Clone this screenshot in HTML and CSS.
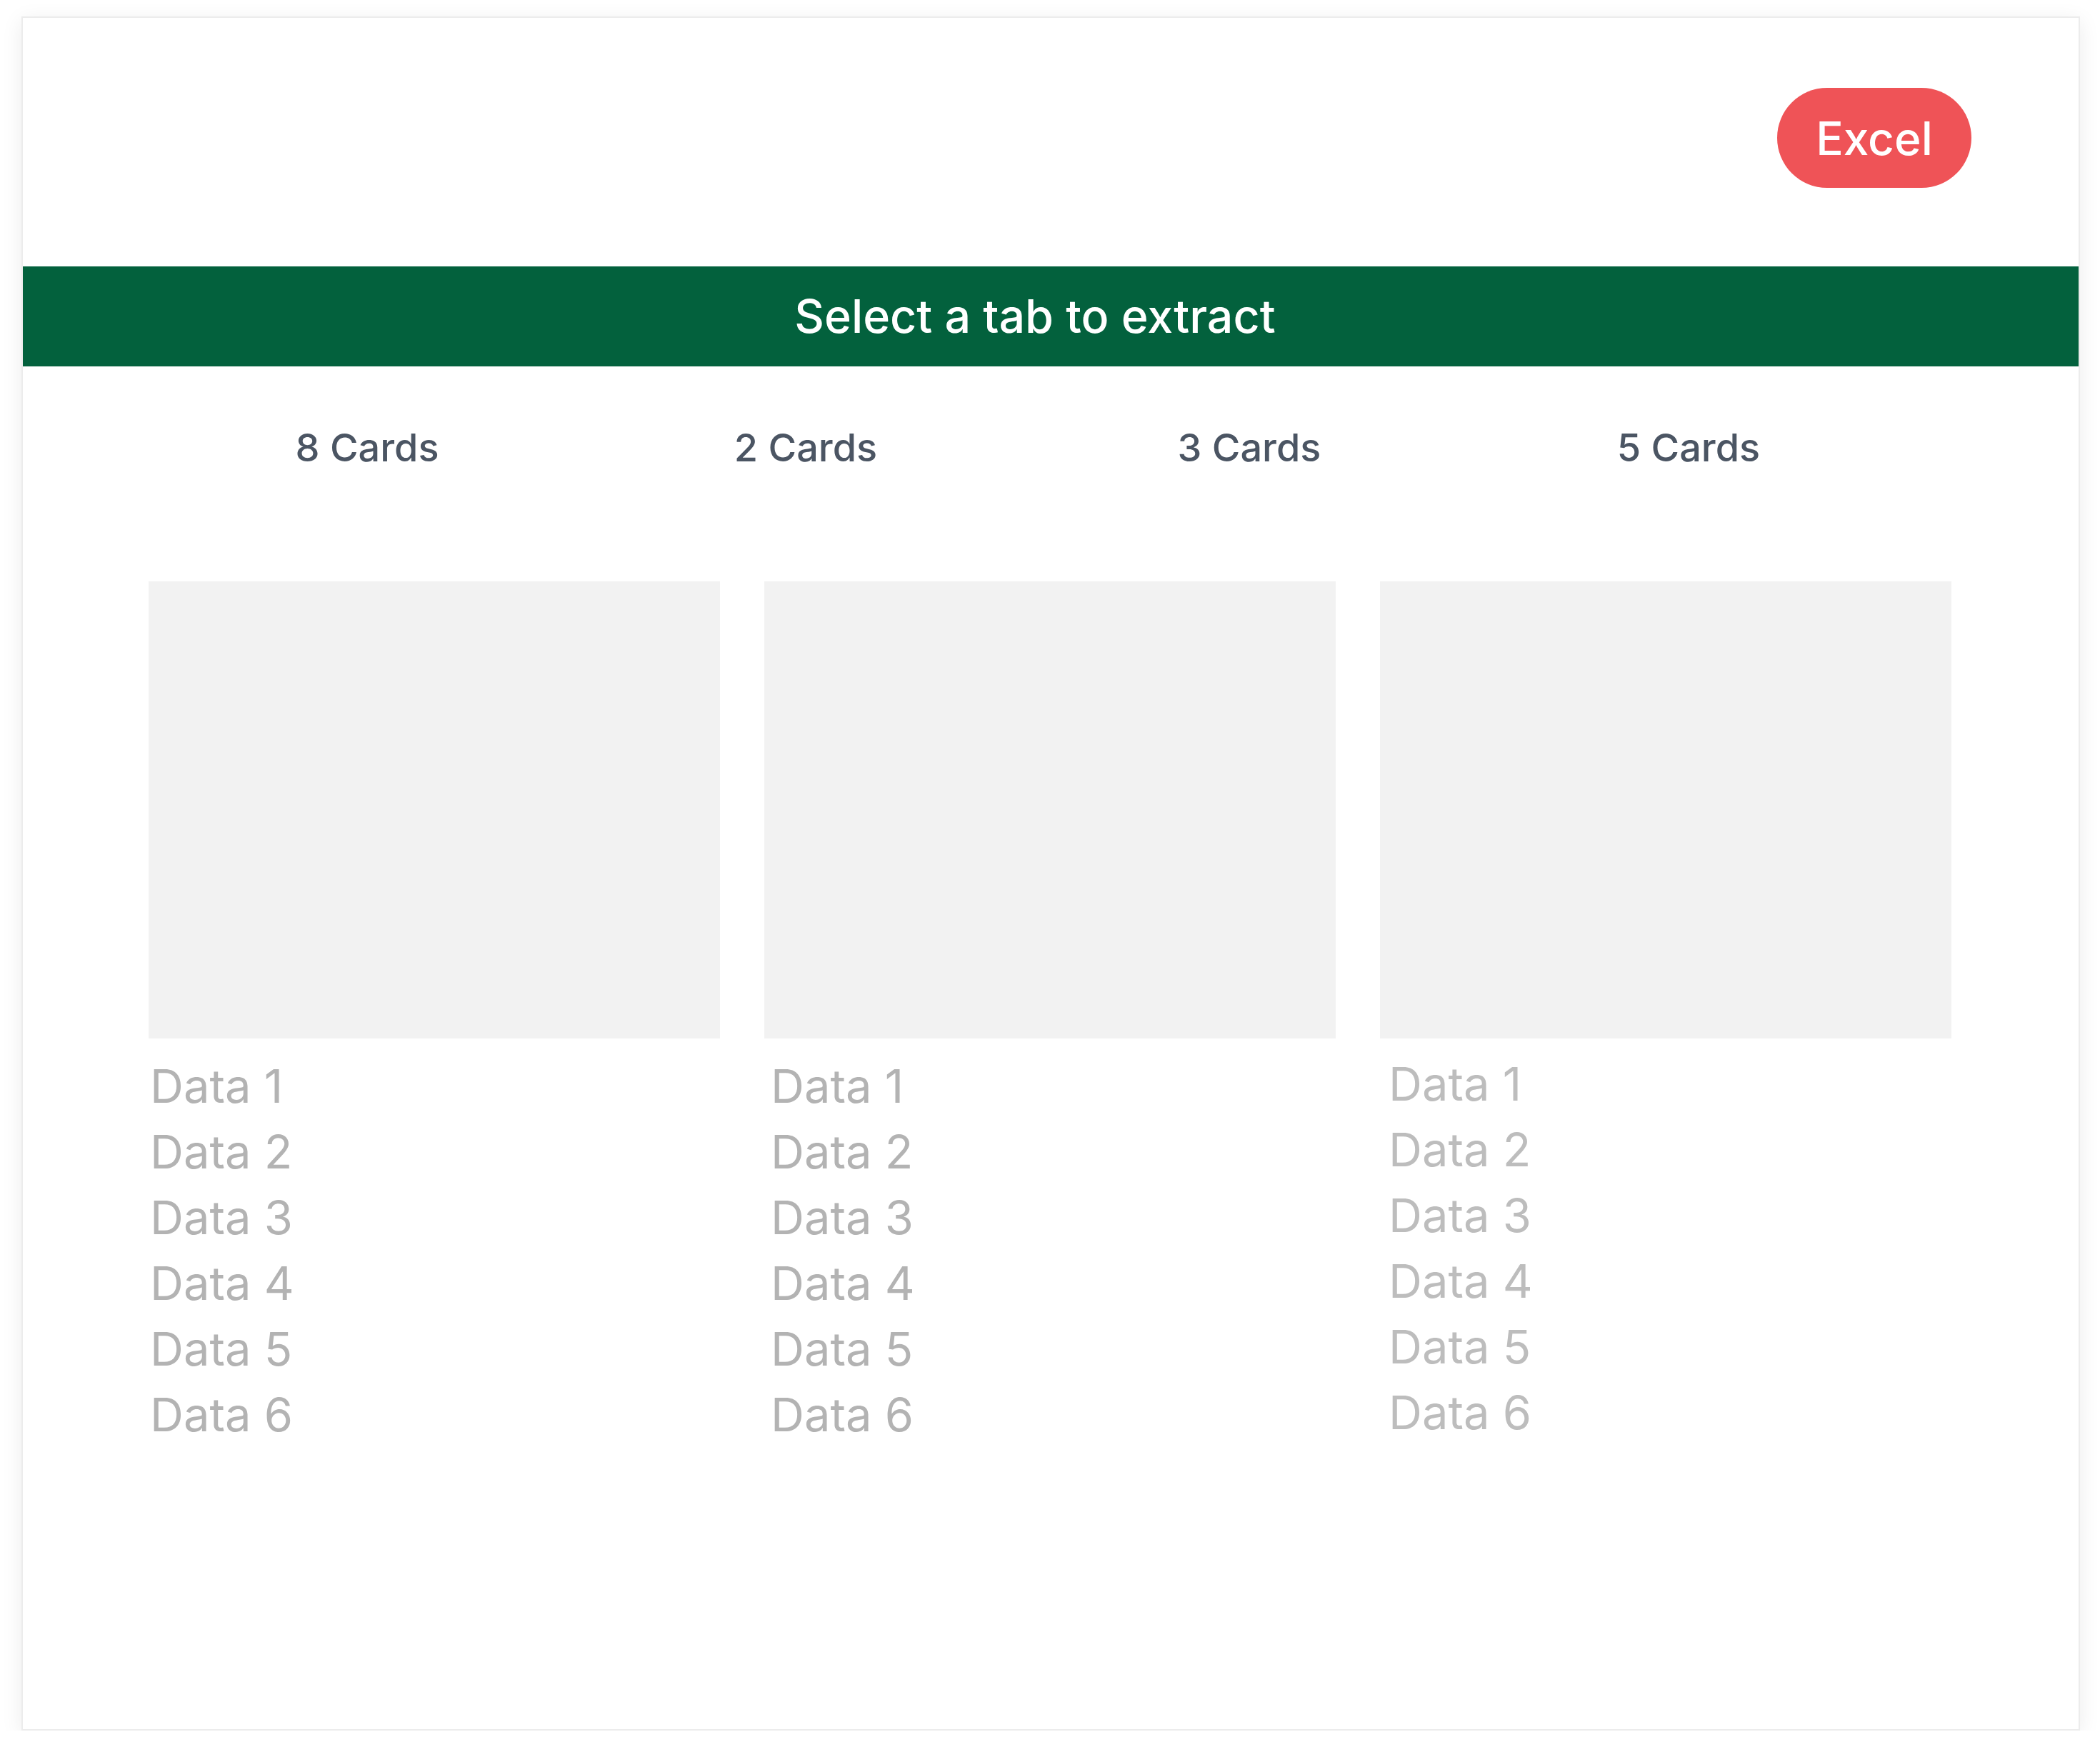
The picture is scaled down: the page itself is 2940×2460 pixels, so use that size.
FILE: index.html
```html
<!DOCTYPE html>
<html>
<head>
    <title>Extract Cards</title>
    <link rel="stylesheet" href="styles.css">
</head>
<body>
    <div class="extract-container">
        <div class="top-bar">
            <button class="excel-button" type="button">Excel</button>
        </div>

        <div class="title-bar">Select a tab to extract</div>

        <div class="tab-list">
            <div class="tab">8 Cards</div>
            <div class="tab">2 Cards</div>
            <div class="tab">3 Cards</div>
            <div class="tab">5 Cards</div>
        </div>

        <div class="card-grid">
            <div class="card card-first">
                <div class="card-image"></div>
                <ul class="card-data">
                    <li>Data 1</li>
                    <li>Data 2</li>
                    <li>Data 3</li>
                    <li>Data 4</li>
                    <li>Data 5</li>
                    <li>Data 6</li>
                </ul>
            </div>
            <div class="card card-second">
                <div class="card-image"></div>
                <ul class="card-data">
                    <li>Data 1</li>
                    <li>Data 2</li>
                    <li>Data 3</li>
                    <li>Data 4</li>
                    <li>Data 5</li>
                    <li>Data 6</li>
                </ul>
            </div>
            <div class="card card-third">
                <div class="card-image"></div>
                <ul class="card-data">
                    <li>Data 1</li>
                    <li>Data 2</li>
                    <li>Data 3</li>
                    <li>Data 4</li>
                    <li>Data 5</li>
                    <li>Data 6</li>
                </ul>
            </div>
        </div>
    </div>
</body>
</html>
```

FILE: styles.css
```css
body {
    margin: 0;
    font-family: Inter, "Noto Sans", Arial, sans-serif;
    background-color: #fff;
}

.extract-container {
    box-sizing: border-box;
    width: 2882px;
    height: 2400px;
    margin: 23px 0 0 30px;
    border: 2px solid #ececec;
    background-color: #fff;
    box-shadow: 0 6px 28px rgba(0, 0, 0, 0.08); /* soft frame shadow */
}

.top-bar {
    box-sizing: border-box;
    height: 348px;
    display: flex;
    justify-content: flex-end;
    align-items: flex-start;
    padding: 98px 150px 0 0;
}

.excel-button {
    width: 272px;
    height: 140px;
    border: none;
    border-radius: 70px;
    background-color: #ef5357; /* red */
    color: #fff;
    font-family: Inter, "Noto Sans", Arial, sans-serif;
    font-size: 64px;
    font-weight: 500;
    cursor: pointer;
}

.title-bar {
    height: 140px;
    display: flex;
    justify-content: center;
    align-items: center;
    padding-right: 44px;
    background-color: #03613d; /* dark green */
    color: #fff;
    font-size: 64.5px;
    font-weight: 500;
}

.tab-list {
    display: grid;
    grid-template-columns: 616px 612px 630px 600px;
    padding: 81px 0 0 174px;
}

.tab {
    text-align: center;
    color: #4b5563;
    font-size: 54px;
    font-weight: 500;
    line-height: 65px;
    cursor: pointer;
}

.card-grid {
    display: grid;
    grid-template-columns: repeat(3, 800px);
    column-gap: 62px;
    padding: 155px 0 0 176px;
}

.card-image {
    height: 640px;
    background-color: #f2f2f2;
}

.card-data {
    list-style: none;
    margin: 21px 0 0 0;
    padding: 0 0 0 2px;
    color: #b3b3b3;
    font-size: 65px;
    line-height: 92px;
}

.card-second .card-data {
    padding-left: 9px;
}

.card-third .card-data {
    margin-top: 18px;
    padding-left: 12px;
    color: #bdbdbd;
}
```
